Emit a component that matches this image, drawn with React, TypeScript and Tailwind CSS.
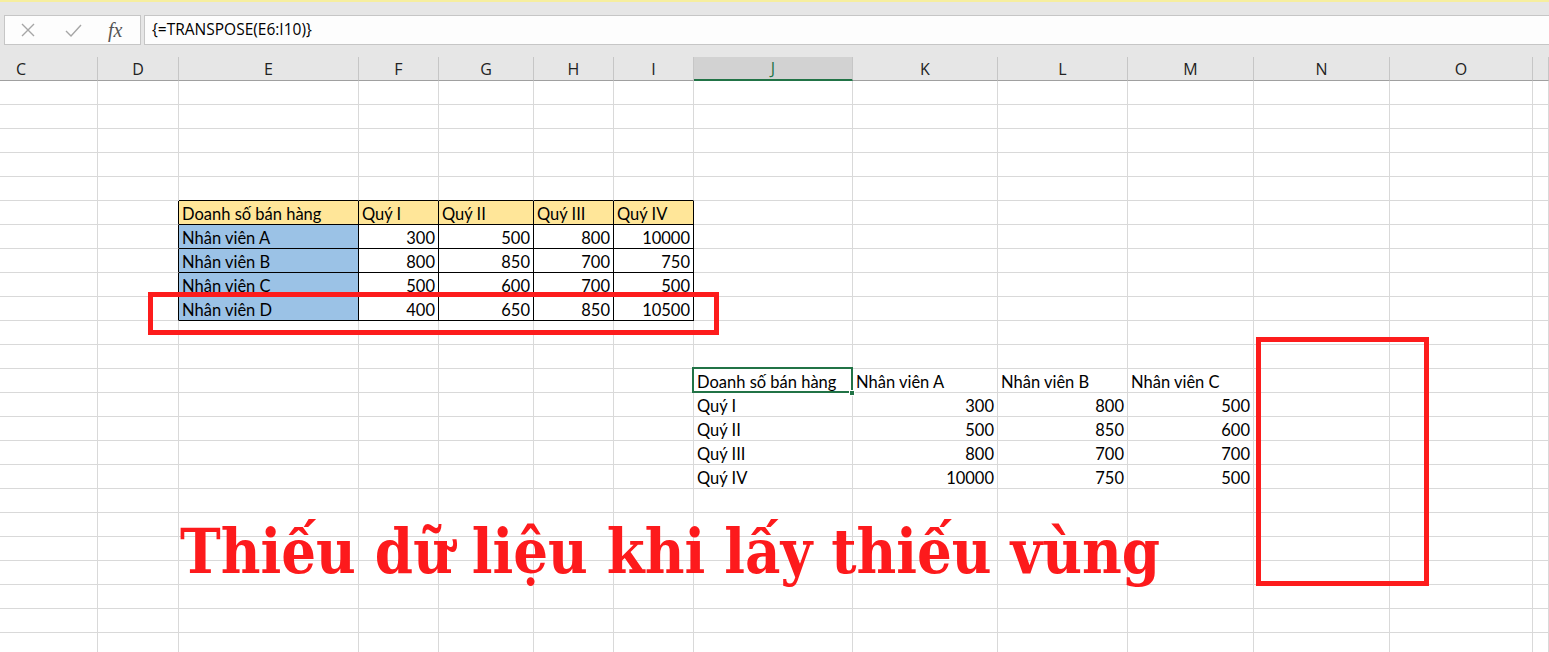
import React from "react";

const COLS = ["C", "D", "E", "F", "G", "H", "I", "J", "K", "L", "M", "N", "O", ""];
const ROWS = 24;

type Cell = { v: string; right?: boolean; fill?: "y" | "b" };

const data: Record<string, Cell> = {};
const t1 = [
  ["Doanh số bán hàng", "Quý I", "Quý II", "Quý III", "Quý IV"],
  ["Nhân viên A", "300", "500", "800", "10000"],
  ["Nhân viên B", "800", "850", "700", "750"],
  ["Nhân viên C", "500", "600", "700", "500"],
  ["Nhân viên D", "400", "650", "850", "10500"],
];
t1.forEach((row, r) =>
  row.forEach((v, c) => {
    data[`${r + 6}-${c + 2}`] = {
      v,
      right: r > 0 && c > 0,
      fill: r === 0 ? "y" : c === 0 ? "b" : undefined,
    };
  })
);
const t2 = [
  ["Doanh số bán hàng", "Nhân viên A", "Nhân viên B", "Nhân viên C"],
  ["Quý I", "300", "800", "500"],
  ["Quý II", "500", "850", "600"],
  ["Quý III", "800", "700", "700"],
  ["Quý IV", "10000", "750", "500"],
];
t2.forEach((row, r) =>
  row.forEach((v, c) => {
    data[`${r + 13}-${c + 7}`] = { v, right: r > 0 && c > 0 };
  })
);

const inT1 = (r: number, c: number) => r >= 6 && r <= 10 && c >= 2 && c <= 6;

function GridCell({ r, c }: { r: number; c: number }) {
  const d = data[`${r}-${c}`];
  const blackR = inT1(r, c) || inT1(r, c + 1);
  const blackB = inT1(r, c) || inT1(r + 1, c);
  const rCls = blackR ? "border-r-black" : "border-r-[#d9d9d9]";
  const bCls = blackB ? "border-b-black" : "border-b-[#d9d9d9]";
  const fill =
    d?.fill === "y" ? "bg-[#ffe699]" : d?.fill === "b" ? "bg-[#9bc2e6]" : "bg-white";
  const align = d?.right ? "justify-end pr-[3px]" : "justify-start pl-[3px]";
  return (
    <div
      className={`h-[24px] border-r border-b ${rCls} ${bCls} ${fill} flex items-end pb-0 ${align} overflow-visible whitespace-nowrap text-[16.5px] leading-[20px] text-black`}
      style={{ fontFamily: "Lato, 'Noto Sans', sans-serif" }}
    >
      {d?.v ?? ""}
    </div>
  );
}

export default function App() {
  return (
    <div className="relative w-[1549px] h-[652px] overflow-hidden bg-white">
      {/* top strip */}
      <div className="h-[2px] bg-[#f6ee9f]" />
      {/* formula bar area */}
      <div className="h-[55px] bg-[#e6e6e6] flex pt-[13px] pl-[4px] gap-[3px]">
        <div className="w-[137px] h-[30px] bg-[#fdfdfd] border border-[#c6c6c6] flex items-center">
          <svg width="14" height="14" viewBox="0 0 14 14" className="ml-[16px]">
            <path d="M1 1 L13 13 M13 1 L1 13" stroke="#a6a6a6" strokeWidth="1.4" fill="none" />
          </svg>
          <svg width="17" height="13" viewBox="0 0 17 13" className="ml-[30px]">
            <path d="M1 7 L6 12 L16 1" stroke="#a6a6a6" strokeWidth="1.4" fill="none" />
          </svg>
          <span
            className="ml-[26px] italic text-[20px] leading-none text-[#555]"
            style={{ fontFamily: "'Liberation Serif', serif" }}
          >
            fx
          </span>
        </div>
        <div className="flex-1 h-[30px] bg-[#fdfdfd] border border-[#c6c6c6] border-r-0 flex items-center pl-[7px]">
          <span
            className="text-[15.5px] text-black"
            style={{ fontFamily: "'Open Sans', 'Noto Sans', sans-serif" }}
          >
            {"{=TRANSPOSE(E6:I10)}"}
          </span>
        </div>
      </div>
      {/* grid */}
      <div className="grid grid-cols-[98px_81px_180px_80px_95px_80px_80px_159px_145px_130px_126px_136px_143px_1fr]">
        {COLS.map((l, i) => (
          <div
            key={l + i}
            className={
              l === "J"
                ? "h-[24px] bg-[#d2d2d2] border-r border-r-[#c6c6c6] border-b-2 border-b-[#217346] flex items-center justify-center text-[16px] text-[#217346]"
                : i === 0
                ? "h-[24px] bg-[#e6e6e6] border-r border-r-[#c6c6c6] border-b border-b-[#a0a0a0] flex items-center pl-[16px] text-[16px] text-[#222]"
                : "h-[24px] bg-[#e6e6e6] border-r border-r-[#c6c6c6] border-b border-b-[#a0a0a0] flex items-center justify-center text-[16px] text-[#222]"
            }
            style={{ fontFamily: "'Open Sans', 'Noto Sans', sans-serif" }}
          >
            {l}
          </div>
        ))}
        {Array.from({ length: ROWS }).map((_, ri) =>
          COLS.map((_, ci) => <GridCell key={`${ri}-${ci}`} r={ri + 1} c={ci} />)
        )}
      </div>

      {/* selection */}
      <div className="absolute left-[692px] top-[367px] w-[161px] h-[26px] border-2 border-[#217346]" />
      <div className="absolute left-[849px] top-[390px] w-[6px] h-[6px] bg-[#217346] border border-white" />

      {/* annotations */}
      <div className="absolute left-[148px] top-[292px] w-[571px] h-[43px] border-[5px] border-[#fd1c1c]" />
      <div className="absolute left-[1256px] top-[337px] w-[173px] h-[249px] border-[5px] border-[#fd1c1c]" />
      <div
        className="absolute left-[180px] top-[522px] text-[62px] leading-[60px] font-bold text-[#fd1a1c] whitespace-nowrap origin-left scale-x-[0.98]"
        style={{ fontFamily: "'DejaVu Serif Condensed', 'DejaVu Serif', serif", fontStretch: "condensed" }}
      >
        Thiếu dữ liệu khi lấy thiếu vùng
      </div>
    </div>
  );
}
